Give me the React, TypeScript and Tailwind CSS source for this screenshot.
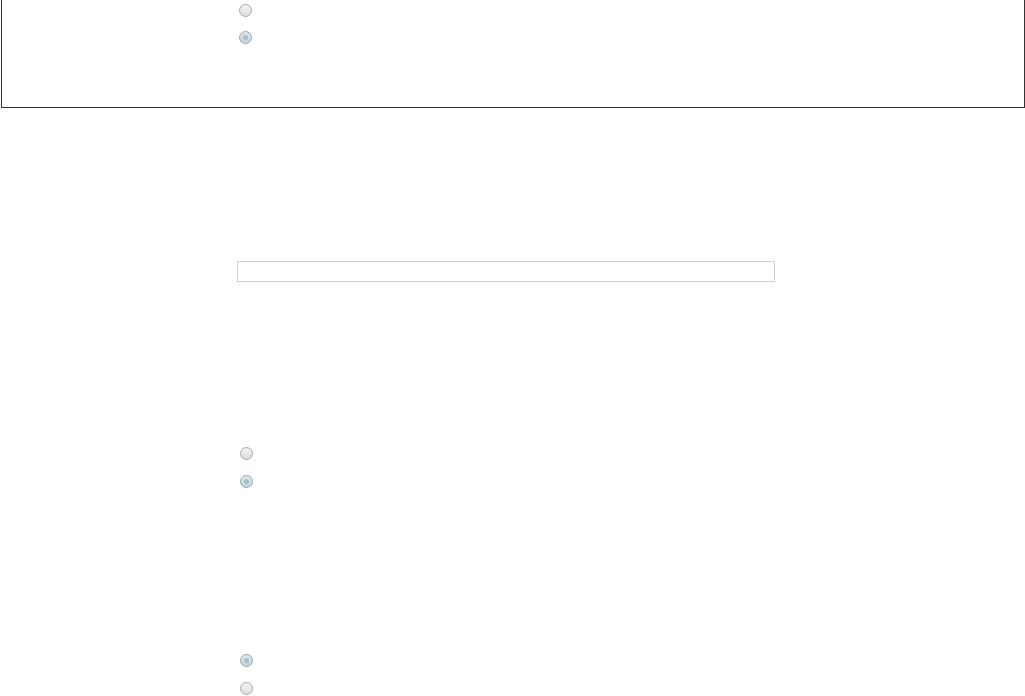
import React from 'react';

const Radio: React.FC<{ checked?: boolean }> = ({ checked }) => {
  if (checked) {
    return (
      <span className="flex h-[13px] w-[13px] items-center justify-center rounded-full border border-[#9aa4aa] bg-gradient-to-b from-[#dfe8ee] to-[#c3d3dd]">
        <span className="h-[5px] w-[5px] rounded-full bg-[#a9bfcd]" />
      </span>
    );
  }
  return (
    <span className="block h-[13px] w-[13px] rounded-full border border-[#a8a8a8] bg-gradient-to-b from-[#f4f4f4] to-[#dcdcdc]" />
  );
};

export default function App() {
  return (
    <div className="min-h-[696px] w-[1025px] bg-white font-['Liberation_Sans',sans-serif]">
      {/* Framed panel, its top runs above the viewport */}
      <div className="ml-[1px] h-[108px] w-[1024px] border-x border-b border-[#333]">
        <div className="flex flex-col gap-[14px] pl-[237px] pt-[4px]">
          <Radio />
          <Radio checked />
        </div>
      </div>

      <div className="mt-[153px] pl-[237px]">
        <input
          type="text"
          className="block h-[21px] w-[538px] border border-[#cfcfcf] bg-white outline-none"
        />
      </div>

      <div className="mt-[165px] flex flex-col gap-[15px] pl-[240px]">
        <Radio />
        <Radio checked />
      </div>

      <div className="mt-[166px] flex flex-col gap-[15px] pl-[240px]">
        <Radio checked />
        <Radio />
      </div>
    </div>
  );
}
